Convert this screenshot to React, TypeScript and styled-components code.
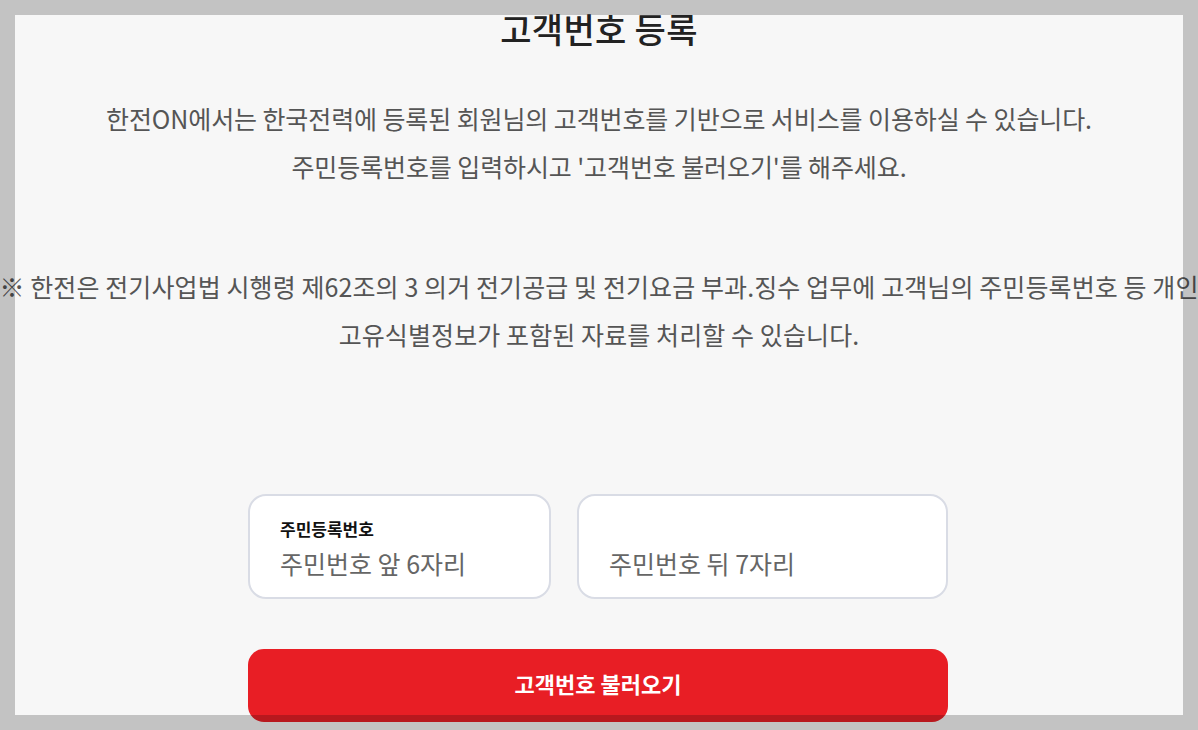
import React from "react";
import styled, { createGlobalStyle } from "styled-components";

const GlobalStyle = createGlobalStyle`
  html, body {
    margin: 0;
    padding: 0;
    background: #f7f7f7;
    overflow: hidden;
  }
  body {
    font-family: "Noto Sans CJK KR", "Noto Sans", sans-serif;
  }
`;

// dim frame laid over the page edges (multiplies what is under it)
const Frame = styled.div`
  position: fixed;
  inset: 0;
  border: 15px solid #cacaca;
  mix-blend-mode: multiply;
  pointer-events: none;
  z-index: 10;
`;

const Page = styled.main`
  width: 100%;
  display: flex;
  flex-direction: column;
  align-items: center;
`;

const Title = styled.h1`
  margin: 8px 0 0;
  font-size: 34px;
  line-height: 42px;
  font-weight: 500;
  color: #222;
  letter-spacing: 0.3px;
`;

const Lead = styled.p<{ $spacing?: number }>`
  margin: 44px 0 0;
  font-size: 25px;
  line-height: 48px;
  font-weight: 400;
  color: #555;
  text-align: center;
  white-space: nowrap;
  letter-spacing: ${(p) => p.$spacing ?? -0.1}px;
`;

const Notice = styled(Lead)`
  margin-top: 72px;
`;

const Form = styled.section`
  width: 700px;
  margin: 136px 2px 0 0;
  display: flex;
  flex-direction: column;
  gap: 50px;
`;

const Fields = styled.div`
  display: grid;
  grid-template-columns: 303px 1fr;
  gap: 26px;
`;

const Field = styled.label`
  height: 105px;
  box-sizing: border-box;
  border: 2px solid #d9dce5;
  border-radius: 18px;
  background: #fff;
  padding: 22px 30px 0;
  display: flex;
  flex-direction: column;
`;

const FieldLabel = styled.span`
  font-size: 17px;
  line-height: 22px;
  font-weight: 700;
  color: #111;
  min-height: 22px;
`;

const FieldInput = styled.input`
  border: 0;
  outline: 0;
  background: transparent;
  padding: 0;
  margin-top: 6px;
  font-family: inherit;
  font-size: 25px;
  line-height: 34px;
  height: 34px;
  color: #222;

  &::placeholder {
    color: #666;
  }
`;

const SubmitButton = styled.button`
  height: 73px;
  border: 0;
  border-radius: 16px;
  padding: 0 0 5px;
  background: #e81e25;
  color: #fff;
  font-family: inherit;
  font-size: 22px;
  font-weight: 700;
  cursor: pointer;
`;

export default function App() {
  return (
    <>
      <GlobalStyle />
      <Page>
        <Title>고객번호 등록</Title>
        <Lead>
          한전ON에서는 한국전력에 등록된 회원님의 고객번호를 기반으로 서비스를 이용하실 수 있습니다.
          <br />
          주민등록번호를 입력하시고 '고객번호 불러오기'를 해주세요.
        </Lead>
        <Notice $spacing={0.1}>
          ※ 한전은 전기사업법 시행령 제62조의 3 의거 전기공급 및 전기요금 부과.징수 업무에 고객님의 주민등록번호 등 개인
          <br />
          고유식별정보가 포함된 자료를 처리할 수 있습니다.
        </Notice>
        <Form>
          <Fields>
            <Field>
              <FieldLabel>주민등록번호</FieldLabel>
              <FieldInput placeholder="주민번호 앞 6자리" maxLength={6} />
            </Field>
            <Field>
              <FieldLabel aria-hidden="true" />
              <FieldInput placeholder="주민번호 뒤 7자리" type="password" maxLength={7} />
            </Field>
          </Fields>
          <SubmitButton type="button">고객번호 불러오기</SubmitButton>
        </Form>
      </Page>
      <Frame />
    </>
  );
}
